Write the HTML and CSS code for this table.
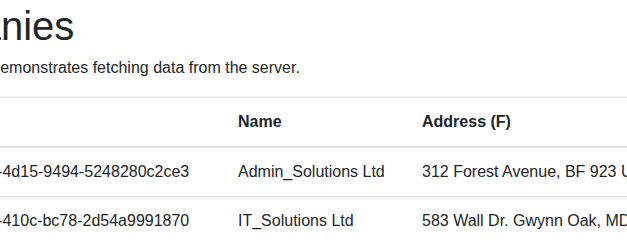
FILE: index.html
```html
<!DOCTYPE html>
<html lang="en">
<head>
<meta charset="utf-8">
<title>Companies</title>
<link rel="stylesheet" href="styles.css">
</head>
<body>
<main class="page">
  <h1 class="title">Companies</h1>
  <p class="lead-text">This component demonstrates fetching data from the server.</p>
  <table class="data-table">
    <colgroup>
      <col class="col-id">
      <col class="col-name">
      <col class="col-address">
      <col class="col-extra">
    </colgroup>
    <thead>
      <tr>
        <th>Id</th>
        <th>Name</th>
        <th>Address (F)</th>
        <th>Country</th>
      </tr>
    </thead>
    <tbody>
      <tr>
        <td>3b6e8a21-97d0-4d15-9494-5248280c2ce3</td>
        <td>Admin_Solutions Ltd</td>
        <td>312 Forest Avenue, BF 923 USA</td>
        <td>USA</td>
      </tr>
      <tr>
        <td>e2a4d7b5-18d9-410c-bc78-2d54a9991870</td>
        <td>IT_Solutions Ltd</td>
        <td>583 Wall Dr. Gwynn Oak, MD 21207</td>
        <td>USA</td>
      </tr>
    </tbody>
  </table>
</main>
</body>
</html>
```
FILE: styles.css
```css
html, body {
  margin: 0;
  padding: 0;
  overflow: hidden;
  background: #fff;
}

body {
  font-family: "Liberation Sans", Arial, sans-serif;
  font-size: 16px;
  line-height: 1.5;
  color: #212529;
}

.page {
  margin-left: -127px;
  width: 1100px;
}

.title {
  font-size: 40px;
  font-weight: 400;
  line-height: 48px;
  margin: 2px 0 6px -1px;
}

.lead-text {
  margin: 0 0 17px;
}

.data-table {
  border-collapse: collapse;
  table-layout: fixed;
  width: 1100px;
}

.col-id { width: 353px; }
.col-name { width: 184px; }
.col-address { width: 360px; }

.data-table th,
.data-table td {
  padding: 12px;
  text-align: left;
  white-space: nowrap;
  overflow: hidden;
  border-top: 1px solid #dee2e6;
  vertical-align: top;
}

.data-table th {
  font-weight: 700;
  vertical-align: bottom;
}

.data-table thead th {
  border-bottom: 2px solid #dee2e6;
}
```
